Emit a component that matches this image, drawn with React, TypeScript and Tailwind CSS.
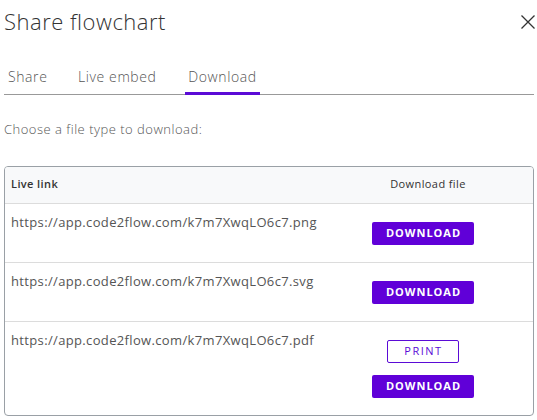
const URL_BASE = "https://app.code2flow.com/k7m7XwqLO6c7";

const rows = [
  { ext: "png", print: false },
  { ext: "svg", print: false },
  { ext: "pdf", print: true },
];

export default function App() {
  return (
    <div className="h-[420px] w-[537px] overflow-hidden bg-white font-['Open_Sans',sans-serif] text-[#444]">
      <div className="flex items-start justify-between pl-1 pt-[6px]">
        <h1 className="text-[22px] font-light leading-[30px] tracking-[0.5px] text-[#333]">Share flowchart</h1>
        <button type="button" aria-label="Close" className="mr-[1px] mt-[8px] text-[#333]">
          <svg width="16" height="16" viewBox="0 0 16 16" fill="none" stroke="currentColor" strokeWidth="1.3" aria-hidden>
            <path d="M1.5 1.5l13 13M14.5 1.5l-13 13" />
          </svg>
        </button>
      </div>

      {/* tabs */}
      <div className="mx-1 mt-[31px] flex h-[28px] w-[530px] items-start border-b border-[#999] text-[14px] font-light tracking-[0.6px] text-[#555]">
        <div className="w-[70px] pl-1 leading-[20px]">Share</div>
        <div className="w-[111px] pl-1 leading-[20px]">Live embed</div>
        <div className="h-[28px] w-[75px] border-b-[3px] border-[#5b0bd6] text-center leading-[20px]">Download</div>
      </div>

      <p className="ml-1 mt-[25px] text-[13px] font-light tracking-[0.5px] text-[#555]">Choose a file type to download:</p>

      <div className="ml-1 mt-[26px] w-[530px] overflow-hidden rounded-[4px] border border-[#9aa0a6]">
        <div className="grid h-[37px] grid-cols-[minmax(0,1fr)_220px] items-center border-b border-[#dcdcdc] bg-[#f8f9fa] text-[11px] tracking-[0.4px] text-[#333]">
          <div className="pl-[6px] font-semibold">Live link</div>
          <div className="pl-[10px] text-center">Download file</div>
        </div>
        {rows.map((r, i) => (
          <div
            key={r.ext}
            className={`grid grid-cols-[minmax(0,1fr)_220px] ${i < rows.length - 1 ? "border-b border-[#dcdcdc]" : ""}`}
          >
            <div className="whitespace-nowrap pl-[6px] pt-[9px] text-[13px] font-normal tracking-[0.35px] text-[#555]">
              {URL_BASE}.{r.ext}
            </div>
            <div className="flex flex-col items-center pb-[17px] pt-[18px]">
              {r.print && (
                <button type="button" className="mb-[12px] h-[23px] w-[72px] rounded-[2px] border border-[#5b0bd6] pl-[1px] text-[11px] tracking-[1.5px] text-[#5b0bd6]">
                  PRINT
                </button>
              )}
              <button type="button" className="h-[23px] w-[102px] rounded-[2px] bg-[#6000d8] pl-[1px] text-[11px] font-bold tracking-[1px] text-white">
                DOWNLOAD
              </button>
            </div>
          </div>
        ))}
      </div>
    </div>
  );
}
